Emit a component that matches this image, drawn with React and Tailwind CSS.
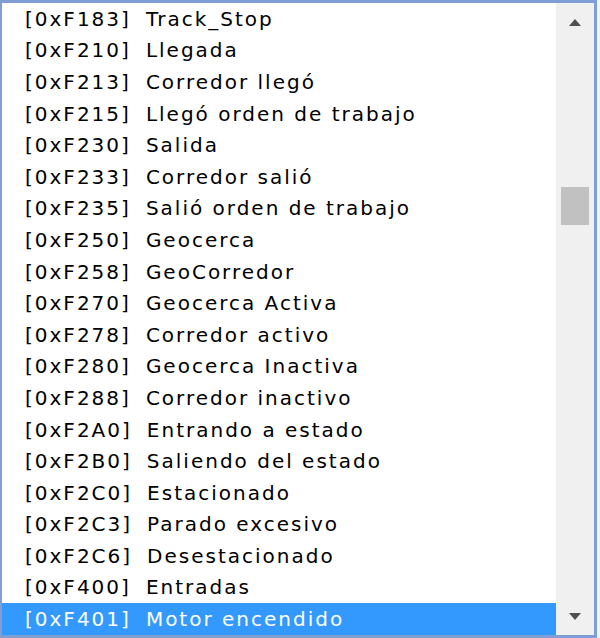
import { useState } from 'react'

const items = [
  ['0xF183', 'Track_Stop'],
  ['0xF210', 'Llegada'],
  ['0xF213', 'Corredor llegó'],
  ['0xF215', 'Llegó orden de trabajo'],
  ['0xF230', 'Salida'],
  ['0xF233', 'Corredor salió'],
  ['0xF235', 'Salió orden de trabajo'],
  ['0xF250', 'Geocerca'],
  ['0xF258', 'GeoCorredor'],
  ['0xF270', 'Geocerca Activa'],
  ['0xF278', 'Corredor activo'],
  ['0xF280', 'Geocerca Inactiva'],
  ['0xF288', 'Corredor inactivo'],
  ['0xF2A0', 'Entrando a estado'],
  ['0xF2B0', 'Saliendo del estado'],
  ['0xF2C0', 'Estacionado'],
  ['0xF2C3', 'Parado excesivo'],
  ['0xF2C6', 'Desestacionado'],
  ['0xF400', 'Entradas'],
  ['0xF401', 'Motor encendido']
]

export default function App() {
  const [selected, setSelected] = useState('0xF401')

  return (
    <div className="w-[600px] h-[638px] flex bg-[#f3f3f3] overflow-hidden">
      <div className="w-[597px] h-[638px] flex border-[3px] border-l-2 border-[#7f9ed6] bg-white">
        <ul className="flex-1 flex flex-col font-['DejaVu_Sans',sans-serif] text-[20px] tracking-[2px] text-black">
          {items.map(([code, label]) => (
            <li
              key={code}
              onClick={() => setSelected(code)}
              className={
                'h-[31.6px] flex items-center pl-[23px] whitespace-nowrap cursor-default ' +
                (selected === code ? 'bg-[#3399ff] text-white' : '')
              }
            >
              <span className="mr-[15px]">[{code}]</span>
              <span>{label}</span>
            </li>
          ))}
        </ul>
        <div className="w-[38px] bg-[#f0f0f0] flex flex-col items-center">
          <div className="h-[38px] w-full flex items-center justify-center">
            <svg width="12" height="7" viewBox="0 0 12 7">
              <path d="M6 0 L12 7 L0 7 Z" fill="#505050" />
            </svg>
          </div>
          <div className="flex-1 w-full px-[5px] pt-[146px]">
            <div className="h-[38px] w-full bg-[#c1c1c1]" />
          </div>
          <div className="h-[38px] w-full flex items-center justify-center">
            <svg width="12" height="7" viewBox="0 0 12 7">
              <path d="M0 0 L12 0 L6 7 Z" fill="#505050" />
            </svg>
          </div>
        </div>
      </div>
    </div>
  )
}
